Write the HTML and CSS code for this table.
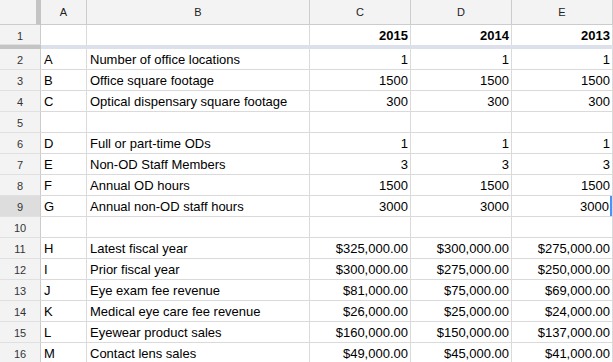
FILE: index.html
```html
<!DOCTYPE html>
<html>
<head>
    <title>Practice Benchmarks</title>
    <link rel="stylesheet" href="styles.css">
</head>
<body>

<div class="sheet">
    <div class="row head">
        <div class="corner"></div>
        <div class="colhead">A</div>
        <div class="colhead">B</div>
        <div class="colhead">C</div>
        <div class="colhead">D</div>
        <div class="colhead">E</div>
    </div>

    <div class="row frozen">
        <div class="rownum">1</div>
        <div class="cell"></div>
        <div class="cell"></div>
        <div class="cell val bold">2015</div>
        <div class="cell val bold">2014</div>
        <div class="cell val bold">2013</div>
    </div>

    <div class="freeze">
        <div class="freeze-head"></div>
        <div class="freeze-data"></div>
    </div>

    <div class="row">
        <div class="rownum">2</div>
        <div class="cell">A</div>
        <div class="cell">Number of office locations</div>
        <div class="cell val">1</div>
        <div class="cell val">1</div>
        <div class="cell val">1</div>
    </div>
    <div class="row">
        <div class="rownum">3</div>
        <div class="cell">B</div>
        <div class="cell">Office square footage</div>
        <div class="cell val">1500</div>
        <div class="cell val">1500</div>
        <div class="cell val">1500</div>
    </div>
    <div class="row">
        <div class="rownum">4</div>
        <div class="cell">C</div>
        <div class="cell">Optical dispensary square footage</div>
        <div class="cell val">300</div>
        <div class="cell val">300</div>
        <div class="cell val">300</div>
    </div>
    <div class="row">
        <div class="rownum">5</div>
        <div class="cell"></div>
        <div class="cell"></div>
        <div class="cell"></div>
        <div class="cell"></div>
        <div class="cell"></div>
    </div>
    <div class="row">
        <div class="rownum">6</div>
        <div class="cell">D</div>
        <div class="cell">Full or part-time ODs</div>
        <div class="cell val">1</div>
        <div class="cell val">1</div>
        <div class="cell val">1</div>
    </div>
    <div class="row">
        <div class="rownum">7</div>
        <div class="cell">E</div>
        <div class="cell">Non-OD Staff Members</div>
        <div class="cell val">3</div>
        <div class="cell val">3</div>
        <div class="cell val">3</div>
    </div>
    <div class="row">
        <div class="rownum">8</div>
        <div class="cell">F</div>
        <div class="cell">Annual OD hours</div>
        <div class="cell val">1500</div>
        <div class="cell val">1500</div>
        <div class="cell val">1500</div>
    </div>
    <div class="row">
        <div class="rownum selected">9</div>
        <div class="cell">G</div>
        <div class="cell">Annual non-OD staff hours</div>
        <div class="cell val">3000</div>
        <div class="cell val">3000</div>
        <div class="cell val cursor">3000</div>
    </div>
    <div class="row">
        <div class="rownum">10</div>
        <div class="cell"></div>
        <div class="cell"></div>
        <div class="cell"></div>
        <div class="cell"></div>
        <div class="cell"></div>
    </div>
    <div class="row">
        <div class="rownum">11</div>
        <div class="cell">H</div>
        <div class="cell">Latest fiscal year</div>
        <div class="cell val">$325,000.00</div>
        <div class="cell val">$300,000.00</div>
        <div class="cell val">$275,000.00</div>
    </div>
    <div class="row">
        <div class="rownum">12</div>
        <div class="cell">I</div>
        <div class="cell">Prior fiscal year</div>
        <div class="cell val">$300,000.00</div>
        <div class="cell val">$275,000.00</div>
        <div class="cell val">$250,000.00</div>
    </div>
    <div class="row">
        <div class="rownum">13</div>
        <div class="cell">J</div>
        <div class="cell">Eye exam fee revenue</div>
        <div class="cell val">$81,000.00</div>
        <div class="cell val">$75,000.00</div>
        <div class="cell val">$69,000.00</div>
    </div>
    <div class="row">
        <div class="rownum">14</div>
        <div class="cell">K</div>
        <div class="cell">Medical eye care fee revenue</div>
        <div class="cell val">$26,000.00</div>
        <div class="cell val">$25,000.00</div>
        <div class="cell val">$24,000.00</div>
    </div>
    <div class="row">
        <div class="rownum">15</div>
        <div class="cell">L</div>
        <div class="cell">Eyewear product sales</div>
        <div class="cell val">$160,000.00</div>
        <div class="cell val">$150,000.00</div>
        <div class="cell val">$137,000.00</div>
    </div>
    <div class="row">
        <div class="rownum">16</div>
        <div class="cell">M</div>
        <div class="cell">Contact lens sales</div>
        <div class="cell val">$49,000.00</div>
        <div class="cell val">$45,000.00</div>
        <div class="cell val">$41,000.00</div>
    </div>
</div>

</body>
</html>
```

FILE: styles.css
```css
body, html {
    margin: 0;
    padding: 0;
    font-family: "Liberation Sans", Arial, sans-serif;
    font-size: 13px;
    background-color: #fff;
    overflow: hidden;
}

.sheet {
    width: 613px;
}

.row {
    display: grid;
    grid-template-columns: 41px 46px 223px 101px 101px 101px;
    height: 21px;
}

.row > div {
    box-sizing: border-box;
    border-right: 1px solid #dadada;
    border-bottom: 1px solid #dadada;
    white-space: nowrap;
    overflow: hidden;
}

/* column headers */
.row.head {
    height: 25px;
}

.row.head > div {
    background-color: #f3f3f3;
    border-right: 1px solid #cccccc;
    border-bottom: 1px solid #cccccc;
}

.corner {
    border-right: 5px solid #c4c4c4 !important;
}

.colhead {
    font-size: 11px;
    color: #222;
    text-align: center;
    line-height: 24px;
}

/* frozen first row */
.row.frozen {
    height: 20px;
}

.row.frozen > div {
    border-bottom: 0;
}

.freeze {
    display: grid;
    grid-template-columns: 41px 572px;
    height: 4px;
}

.freeze-head {
    background-color: #c4c4c4;
}

.freeze-data {
    background-color: #dbe0ea;
}

/* row numbers */
.rownum {
    background-color: #f3f3f3;
    border-right: 1px solid #cccccc !important;
    border-bottom: 1px solid #e0e0e0 !important;
    font-size: 11px;
    color: #333;
    text-align: center;
    padding-top: 1px;
    line-height: 20px;
}

.rownum.selected {
    background-color: #dddddd;
}

.cell {
    color: #000;
    padding: 1px 3px 0;
    line-height: 20px;
}

.cell.val {
    text-align: right;
    padding-right: 2px;
}

.cell.bold {
    font-weight: bold;
}

.cell.cursor {
    box-shadow: inset -2px 0 0 #4d90fe;
    padding-right: 3px;
}
```
